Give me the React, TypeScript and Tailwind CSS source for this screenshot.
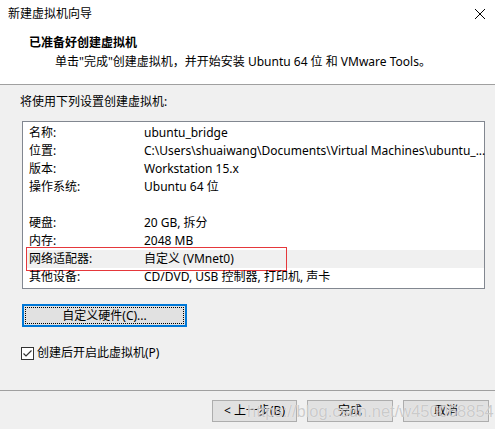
import React from "react";

const font = { fontFamily: '"Noto Sans", "Noto Sans CJK SC", sans-serif' };

const rows: [string, string][] = [
  ["名称:", "ubuntu_bridge"],
  ["位置:", "C:\\Users\\shuaiwang\\Documents\\Virtual Machines\\ubuntu_..."],
  ["版本:", "Workstation 15.x"],
  ["操作系统:", "Ubuntu 64 位"],
  ["", ""],
  ["硬盘:", "20 GB, 拆分"],
  ["内存:", "2048 MB"],
  ["网络适配器:", "自定义 (VMnet0)"],
  ["其他设备:", "CD/DVD, USB 控制器, 打印机, 声卡"],
];

export default function App() {
  return (
    <div
      className="w-[495px] h-[429px] bg-[#f0f0f0] flex flex-col relative overflow-hidden text-[12px] text-black leading-[18px]"
      style={font}
    >
      {/* title bar + header */}
      <div className="bg-white border-b border-[#a0a0a0]">
        <div className="h-[27px] flex items-center justify-between pl-[8px] pr-[9px]">
          <span>新建虚拟机向导</span>
          <svg width="12" height="12" viewBox="0 0 12 12" className="mt-[1px]">
            <path d="M1 1 L11 11 M11 1 L1 11" stroke="#000" strokeWidth="1" />
          </svg>
        </div>
        <div className="pl-[29px] pt-[7px] pb-[13px]">
          <div className="font-bold">已准备好创建虚拟机</div>
          <div className="ml-[26px] mt-[1px]">
            单击"完成"创建虚拟机，并开始安装 Ubuntu 64 位 和 VMware Tools。
          </div>
        </div>
      </div>

      {/* body */}
      <div className="flex-1 pt-[8px]">
        <div className="pl-[20px]">将使用下列设置创建虚拟机:</div>
        <div className="ml-[22px] mt-[10px] w-[463px] h-[168px] border border-[#828790] bg-white pl-[3px] pt-[2px]">
          {rows.map(([k, v], i) => (
            <div
              key={i}
              className={
                "relative flex h-[18px] items-center pl-[3px] " +
                (k === "网络适配器:" ? "bg-[#f0f0f0]" : "")
              }
            >
              <span className="w-[115px] shrink-0">{k}</span>
              <span className="whitespace-nowrap">{v}</span>
              {k === "网络适配器:" && (
                <div className="absolute left-0 top-[-3px] w-[261px] h-[24px] border-[1.5px] border-[#e5383b]" />
              )}
            </div>
          ))}
        </div>

        <button className="ml-[22px] mt-[15px] w-[165px] h-[23px] border-2 border-[#0078d7] bg-[#e1e1e1] p-[1px] flex">
          <span className="flex-1 border border-dotted border-black flex items-center justify-center">
            自定义硬件(C)...
          </span>
        </button>

        <div className="ml-[21px] mt-[17px] flex items-center gap-[3px]">
          <svg width="13" height="13" viewBox="0 0 13 13">
            <rect x="0.5" y="0.5" width="12" height="12" fill="#fff" stroke="#333" />
            <path d="M2.5 6.5 L5 9 L10.5 3.5" stroke="#333" strokeWidth="1.2" fill="none" />
          </svg>
          <span>创建后开启此虚拟机(P)</span>
        </div>
      </div>

      {/* footer */}
      <div className="h-[39px] border-t border-[#a0a0a0] flex justify-end items-start pt-[9px] pr-[6px] gap-[10px]">
        <button className="w-[85px] h-[22px] border border-[#adadad] bg-[#e1e1e1] flex items-center justify-center">
          &lt; 上一步(B)
        </button>
        <button className="w-[86px] h-[22px] border border-[#adadad] bg-[#e1e1e1] flex items-center justify-center">
          完成
        </button>
        <button className="w-[86px] h-[22px] border border-[#adadad] bg-[#e1e1e1] flex items-center justify-center">
          取消
        </button>
      </div>

      {/* watermark */}
      <div
        className="absolute left-[247px] top-[400px] text-[16.5px] leading-[22px] text-[rgba(190,190,190,0.8)] whitespace-nowrap pointer-events-none"
        style={{
          fontFamily: '"Liberation Sans", Arial, sans-serif',
          textShadow: "0 0 1px rgba(255,255,255,0.9)",
        }}
      >
        https://blog.csdn.net/w450068854
      </div>
    </div>
  );
}
